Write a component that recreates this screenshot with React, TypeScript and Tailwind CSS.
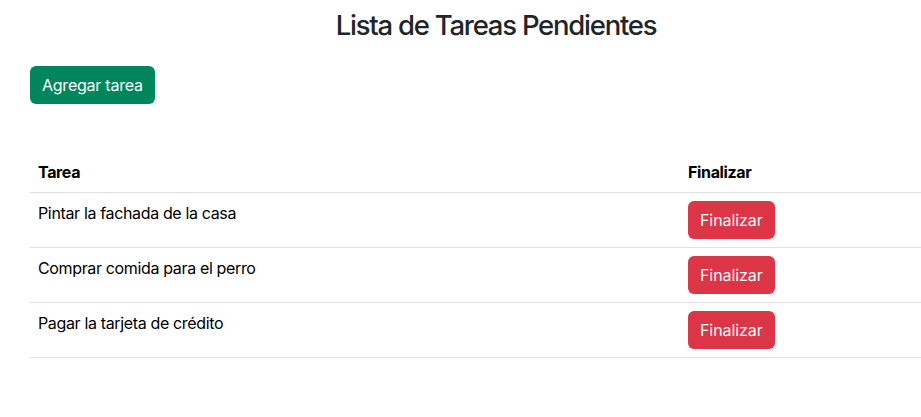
const tasks = [
  'Pintar la fachada de la casa',
  'Comprar comida para el perro',
  'Pagar la tarjeta de crédito',
];

export default function App() {
  return (
    <div className="w-full min-h-screen overflow-hidden bg-white text-[#212529] font-['Inter',sans-serif] tracking-[-0.022em]">
      <div className="w-[932px] ml-[30px]">
        <h2 className="mt-[9px] text-center text-[27.5px] leading-[1.2] font-medium tracking-[-0.045em]">
          Lista de Tareas Pendientes
        </h2>

        <button
          type="button"
          className="mt-[24px] h-[38px] px-[12px] rounded-[6px] bg-[#00865a] text-white text-[16px] leading-[24px] tracking-[-0.015em]"
        >
          Agregar tarea
        </button>

        <table className="mt-[48px] w-full border-collapse text-left text-[16px] leading-[24px] text-black">
          <thead>
            <tr className="border-b border-[#dee2e6]">
              <th className="w-[650px] px-[8px] py-[8px] font-bold">Tarea</th>
              <th className="px-[8px] py-[8px] font-bold">Finalizar</th>
            </tr>
          </thead>
          <tbody>
            {tasks.map((task) => (
              <tr key={task} className="border-b border-[#dee2e6]">
                <td className="px-[8px] py-[8px] align-top">{task}</td>
                <td className="px-[8px] py-[8px] align-top">
                  <button
                    type="button"
                    className="h-[38px] px-[12px] rounded-[6px] bg-[#dc3545] text-white text-[16px] leading-[24px] tracking-[-0.005em]"
                  >
                    Finalizar
                  </button>
                </td>
              </tr>
            ))}
          </tbody>
        </table>
      </div>
    </div>
  );
}
